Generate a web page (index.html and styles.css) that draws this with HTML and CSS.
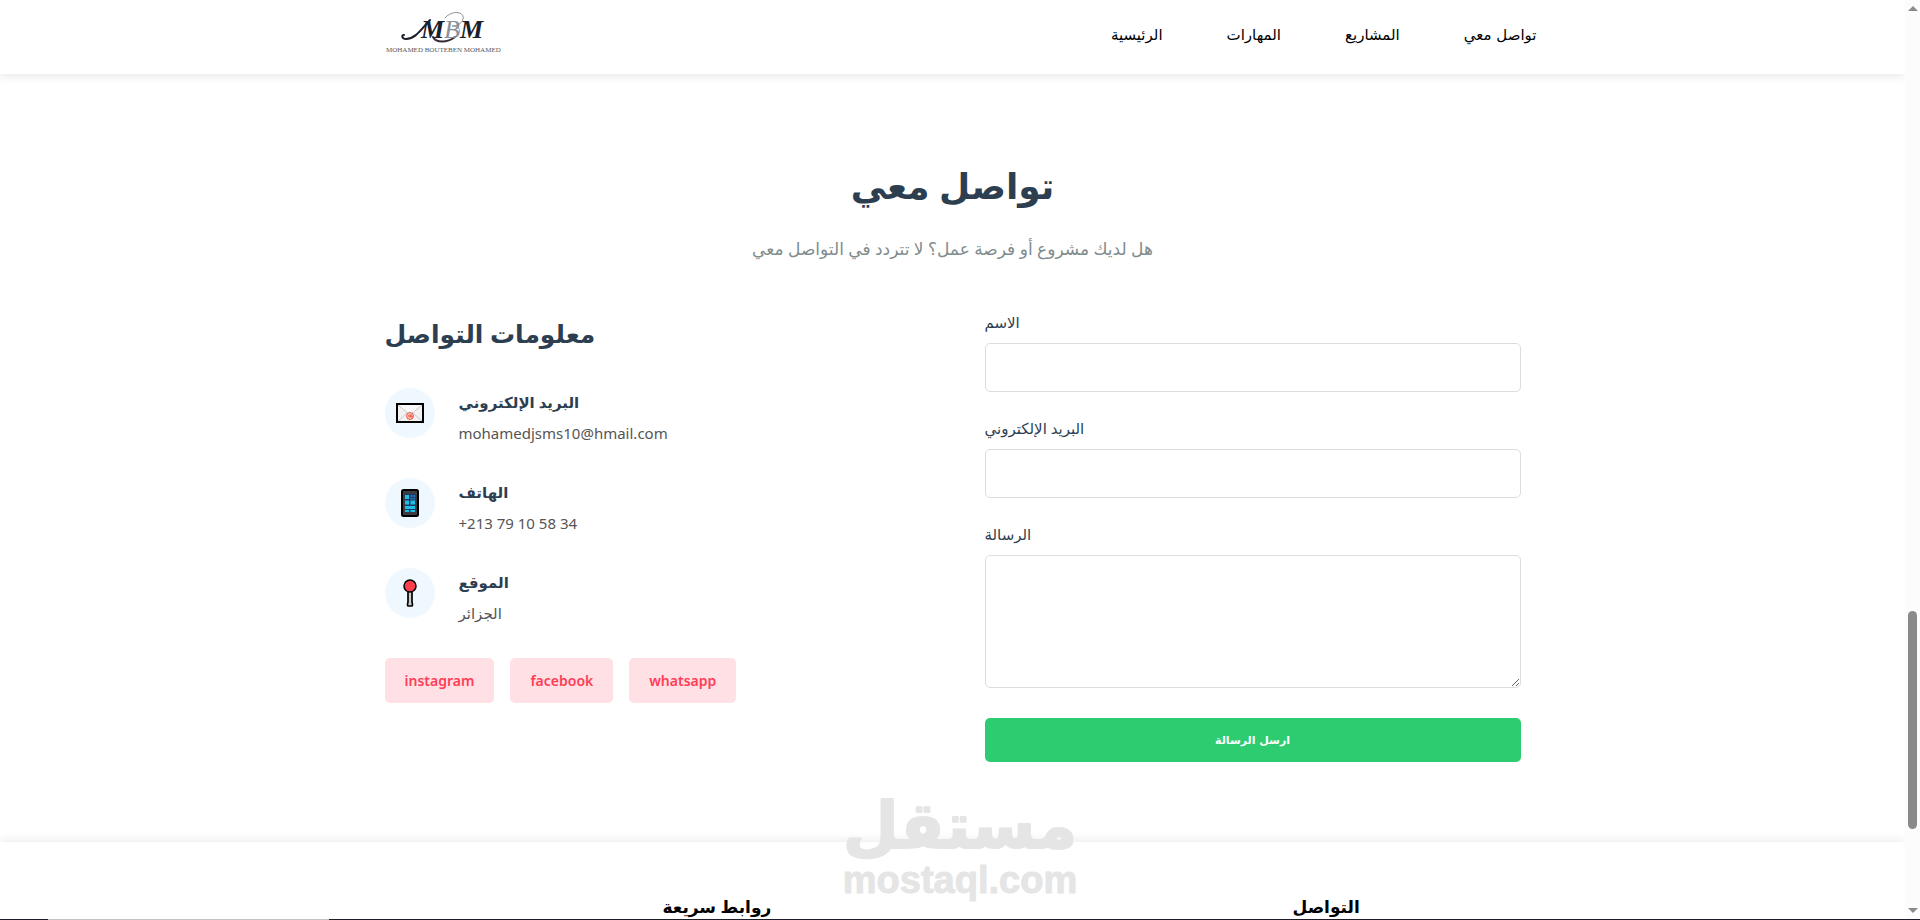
FILE: index.html
```html
<!DOCTYPE html>
<html lang="ar">
<head>
    <meta charset="UTF-8">
    <meta name="viewport" content="width=device-width, initial-scale=1.0">
    <title>تواصل معي</title>
    <link rel="stylesheet" href="styles.css">
</head>
<body>
    <div class="window">
        <div class="page">
            <header class="header">
                <div class="header-container">
                    <a class="logo" href="#home">
                        <svg width="124" height="48" viewBox="0 0 124 48">
                            <g fill="none" stroke-linecap="round">
                                <path d="M45 12 C37 20 31 31 21 31 C17 31 16 27 19 27" stroke="#1b1e2b" stroke-width="2"/>
                                <path d="M48 29 C51 35 62 35 70 29" stroke="#3b2a38" stroke-width="2"/>
                                <path d="M60 10 C66 2 80 3 78 11 C77 16 71 18 67 18 C75 18 78 24 70 29" stroke="#8b9298"/>
                            </g>
                            <text class="logo-mark" x="36" y="30">M<tspan class="logo-thin" x="59">B</tspan><tspan x="75">M</tspan></text>
                            <text class="logo-name" x="1" y="44">MOHAMED BOUTEBEN MOHAMED</text>
                        </svg>
                    </a>
                    <nav class="nav">
                        <a href="#home">الرئيسية</a>
                        <a href="#skills">المهارات</a>
                        <a href="#projects">المشاريع</a>
                        <a href="#contact">تواصل معي</a>
                    </nav>
                </div>
            </header>

            <section class="contact" id="contact">
                <div class="section-title">
                    <h2 dir="rtl">تواصل معي</h2>
                    <p dir="rtl">هل لديك مشروع أو فرصة عمل؟ لا تتردد في التواصل معي</p>
                </div>
                <div class="contact-grid">
                    <div class="contact-info">
                        <h3>معلومات التواصل</h3>
                        <div class="info-item">
                            <div class="info-icon">
                                <svg width="28" height="20" viewBox="0 0 28 20">
                                    <rect x="1" y="1" width="26" height="18" fill="#f2f2f2" stroke="#000" stroke-width="2"/>
                                    <path d="M2 18 L11 10 M26 18 L17 10" stroke="#ccc" fill="none"/>
                                    <path d="M2 2 L14 12 L26 2" fill="#fafafa" stroke="#ccc"/>
                                    <circle cx="14" cy="13" r="3.4" fill="#f8e4de" stroke="#f0452e"/>
                                    <circle cx="13.8" cy="13" r="1.2" fill="none" stroke="#f0452e"/>
                                    <path d="M15.2 11.5 V14 H17" fill="none" stroke="#f0452e"/>
                                </svg>
                            </div>
                            <div>
                                <h4>البريد الإلكتروني</h4>
                                <p>mohamedjsms10@hmail.com</p>
                            </div>
                        </div>
                        <div class="info-item">
                            <div class="info-icon">
                                <svg width="18" height="28" viewBox="0 0 18 28">
                                    <rect x="1" y="1" width="16" height="26" rx="1.5" fill="#3c3c40" stroke="#000" stroke-width="2"/>
                                    <rect x="4" y="5" width="10" height="18" fill="#173a63"/>
                                    <path d="M4 6h4v4h-4z M4 11.5h4v4h-4z M9.5 11.5h4.5v4h-4.5z M4 17h10v3h-10z M4 21h4v2h-4z M9.5 21h4.5v2h-4.5z" fill="#1cbfe8"/>
                                    <path d="M9.5 6h2v2h-2z M12.3 6h1.7v2h-1.7z M9.5 8.7h2v1.7h-2z M12.3 8.7h1.7v1.7h-1.7z" fill="#2874c4"/>
                                </svg>
                            </div>
                            <div>
                                <h4>الهاتف</h4>
                                <p>+213 79 10 58 34</p>
                            </div>
                        </div>
                        <div class="info-item">
                            <div class="info-icon">
                                <svg width="16" height="28" viewBox="0 0 16 28">
                                    <path d="M6 12 V23 Q5 26.5 6 27 H10 Q11 26.5 10 23 V12" fill="#ccc" stroke="#000" stroke-width="1.7"/>
                                    <circle cx="8" cy="7" r="6" fill="#ff3d51" stroke="#000" stroke-width="1.5"/>
                                </svg>
                            </div>
                            <div>
                                <h4>الموقع</h4>
                                <p>الجزائر</p>
                            </div>
                        </div>
                        <div class="social-links">
                            <a href="#instagram">instagram</a>
                            <a href="#facebook">facebook</a>
                            <a href="#whatsapp">whatsapp</a>
                        </div>
                    </div>

                    <form class="contact-form">
                        <div class="form-group">
                            <label for="name">الاسم</label>
                            <input type="text" id="name" name="name">
                        </div>
                        <div class="form-group">
                            <label for="email">البريد الإلكتروني</label>
                            <input type="email" id="email" name="email">
                        </div>
                        <div class="form-group">
                            <label for="message">الرسالة</label>
                            <textarea id="message" name="message"></textarea>
                        </div>
                        <button type="button" class="submit-btn">ارسل الرسالة</button>
                    </form>
                </div>
            </section>

            <footer class="footer">
                <div class="footer-grid">
                    <h3>روابط سريعة</h3>
                    <h3>التواصل</h3>
                </div>
            </footer>
        </div>

        <div class="scrollbar">
            <span class="arrow-up"></span>
            <span class="space-before"></span>
            <span class="thumb"></span>
            <span class="space-after"></span>
            <span class="arrow-down"></span>
        </div>
    </div>
    <div class="taskbar"><span></span></div>

    <div class="watermark">
        <svg width="240" height="140" viewBox="0 0 240 140">
            <text class="watermark-ar" x="120" y="72" text-anchor="middle">مستقل</text>
            <text class="watermark-en" x="120" y="117" text-anchor="middle">mostaql.com</text>
        </svg>
    </div>
</body>
</html>
```

FILE: styles.css
```css
* {
    margin: 0;
    padding: 0;
    box-sizing: border-box;
}

body {
    font-family: "Noto Sans", "DejaVu Sans", sans-serif;
    font-size: 15px;
    line-height: 24px;
    color: #2c3e50;
    background-color: #fff;
    height: 100vh;
    overflow: hidden;
    display: flex;
    flex-direction: column;
}

a {
    text-decoration: none;
}

.window {
    flex: 1;
    min-height: 0;
    display: flex;
}

.page {
    flex: 1;
    overflow: hidden;
}

/* header */
.header {
    position: relative;
    background-color: #fff;
    box-shadow: 0 2px 10px rgba(0,0,0,0.1);
}

.header-container {
    max-width: 1200px;
    margin: 0 auto;
    padding: 8px 16px 12px 32px;
    display: flex;
    justify-content: space-between;
    align-items: center;
}

.logo {
    height: 54px;
}

.logo-mark {
    font: italic bold 26px "Liberation Serif", serif;
    fill: #1b1e2b;
}

.logo-thin {
    font-weight: normal;
    fill: #8b9298;
}

.logo-name {
    font: 7px "Liberation Serif", serif;
    fill: #555a60;
}

.nav {
    display: flex;
    gap: 64px;
}

.nav a {
    color: #000;
    font-family: "DejaVu Sans", sans-serif;
    font-size: 15px;
}

/* contact */
.contact {
    max-width: 1200px;
    margin: 0 auto;
    padding: 80px 32px;
}

.section-title {
    text-align: center;
    margin-bottom: 46px;
}

.section-title h2 {
    font-size: 36px;
    line-height: 64px;
    font-weight: 600;
    margin-bottom: 16px;
}

.section-title p {
    font-size: 17px;
    line-height: 30px;
    color: #7f8c8d;
}

.contact-grid {
    display: grid;
    grid-template-columns: 1fr 1fr;
    gap: 64px;
}

.contact-info h3 {
    font-size: 25px;
    line-height: 46px;
    font-weight: 600;
    margin-bottom: 32px;
}

.info-item {
    display: flex;
    gap: 24px;
    height: 58px;
    margin-bottom: 32px;
}

.info-icon {
    width: 50px;
    height: 50px;
    border-radius: 50%;
    background-color: #f0f8ff;
    display: flex;
    justify-content: center;
    align-items: center;
}

.info-item h4 {
    font-size: 15px;
    line-height: 28px;
    font-weight: 600;
    margin-bottom: 4px;
}

.info-item p {
    color: #555;
    line-height: 26px;
}

.social-links {
    display: flex;
    gap: 16px;
}

.social-links a {
    padding: 10px 20px;
    border-radius: 5px;
    background-color: #ffe0e5;
    color: #ff3d57;
    font-size: 14px;
    font-weight: 600;
    line-height: 25px;
}

.form-group {
    margin-bottom: 24px;
}

.form-group label {
    display: block;
    font-weight: 500;
    line-height: 25px;
    margin-bottom: 8px;
}

.form-group input,
.form-group textarea {
    display: block;
    width: 100%;
    height: 49px;
    padding: 12px;
    border: 1px solid #ddd;
    border-radius: 5px;
    background-color: #fff;
    font-family: inherit;
    font-size: 16px;
}

.form-group textarea {
    height: 133px;
    margin-bottom: 30px;
    resize: vertical;
}

.submit-btn {
    width: 100%;
    height: 44px;
    border: none;
    border-radius: 5px;
    background-color: #2ecc71;
    color: #fff;
    font-family: "DejaVu Sans", sans-serif;
    font-size: 11px;
    font-weight: 600;
    cursor: pointer;
}

/* footer */
.footer {
    background-color: #fff;
    box-shadow: 0 -2px 10px rgba(0,0,0,0.08);
    padding: 48px 0;
}

.footer-grid {
    max-width: 1260px;
    margin: 0 auto;
    padding-left: 340px;
    display: flex;
}

.footer-grid h3 {
    width: 630px;
    flex-shrink: 0;
    font-size: 17px;
    line-height: 34px;
    font-weight: 600;
    color: #000;
}

/* scrollbar */
.scrollbar {
    width: 15px;
    padding: 6px 0;
    background-color: #fcfcfc;
    display: flex;
    flex-direction: column;
    align-items: center;
}

.arrow-up,
.arrow-down {
    border-left: 5px solid transparent;
    border-right: 5px solid transparent;
}

.arrow-up {
    border-bottom: 5px solid #8a8a8a;
}

.arrow-down {
    border-top: 5px solid #8a8a8a;
}

.space-before {
    flex: 600;
}

.thumb {
    flex: 218;
    width: 9px;
    border-radius: 5px;
    background-color: #8a8a8a;
}

.space-after {
    flex: 79;
}

.taskbar {
    height: 1px;
    padding-left: 48px;
    background-color: #1e1e2a;
    display: flex;
}

.taskbar span {
    width: 15%;
    background-color: #c4c4c4;
}

/* watermark over the page */
.watermark {
    position: absolute;
    left: 50%;
    bottom: 4px;
    margin-left: -120px;
    pointer-events: none;
}

.watermark svg {
    display: block;
}

.watermark-ar {
    font: bold 64px "DejaVu Sans", sans-serif;
    fill: #e5e5e5;
    stroke: #e5e5e5;
    stroke-width: 2;
    stroke-linejoin: round;
}

.watermark-en {
    font: bold 38px "Liberation Sans", sans-serif;
    fill: #e5e5e5;
    stroke: #e5e5e5;
    stroke-linejoin: round;
}
```
